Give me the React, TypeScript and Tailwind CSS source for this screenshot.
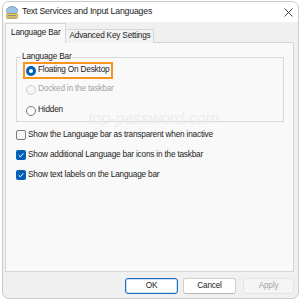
import React from "react";

const FONT = { fontFamily: '"Liberation Sans", Arial, sans-serif' };

const TitleIcon = () => (
    <svg width="12" height="13" viewBox="0 0 12 13" className="shrink-0">
        <ellipse cx="6" cy="4.5" rx="5.5" ry="4" fill="#9cc3e6" stroke="#6b8fb3" strokeWidth="0.8" />
        <rect x="0.5" y="7.5" width="11" height="5" rx="0.8" fill="#e9c95a" stroke="#a88a2c" strokeWidth="0.6" />
        <rect x="1.8" y="9" width="8.4" height="1" fill="#8a8a8a" />
        <rect x="1.8" y="10.8" width="8.4" height="0.8" fill="#9a9a9a" />
    </svg>
);

const Radio = ({ checked, disabled }: { checked?: boolean; disabled?: boolean }) => {
    if (checked) {
        return (
            <span className="w-[10px] h-[10px] rounded-full bg-[#005fb8] flex items-center justify-center shrink-0">
                <span className="w-[4px] h-[4px] rounded-full bg-white" />
            </span>
        );
    }
    return (
        <span
            className={
                disabled
                    ? "w-[10px] h-[10px] rounded-full border border-[#cdcdcd] bg-[#f5f5f5] shrink-0"
                    : "w-[10px] h-[10px] rounded-full border border-[#7a7a7a] bg-[#fdfdfd] shrink-0"
            }
        />
    );
};

const Checkbox = ({ checked }: { checked?: boolean }) =>
    checked ? (
        <span className="w-[10px] h-[10px] rounded-[2px] bg-[#005fb8] flex items-center justify-center shrink-0">
            <svg width="8" height="8" viewBox="0 0 8 8">
                <path d="M1.6 4.2 L3.3 5.8 L6.4 2.4" fill="none" stroke="white" strokeWidth="1" />
            </svg>
        </span>
    ) : (
        <span className="w-[10px] h-[10px] rounded-[2px] border border-[#7a7a7a] bg-[#f6f6f6] shrink-0" />
    );

const OPTIONS = [
    { label: "Show the Language bar as transparent when inactive", checked: false },
    { label: "Show additional Language bar icons in the taskbar", checked: true },
    { label: "Show text labels on the Language bar", checked: true },
];

export default function App() {
    return (
        <div className="w-[300px] h-[300px] bg-white pl-[2px] pt-[1px] text-[8.25px] tracking-[-0.2px] text-[#1b1b1b]" style={FONT}>
            <div className="w-[297px] h-[298px] border border-[#c9c9c9] rounded-[7px] bg-[#f0f0f0] flex flex-col overflow-hidden">
                {/* Title bar */}
                <div className="h-[20px] bg-white flex items-center pl-[3px] pr-[5px] shrink-0">
                    <TitleIcon />
                    <span className="ml-[4px] text-[8.75px] text-[#1a1a1a]">Text Services and Input Languages</span>
                    <svg width="9" height="9" viewBox="0 0 9 9" className="ml-auto">
                        <path d="M0.5 0.5 L8.5 8.5 M8.5 0.5 L0.5 8.5" stroke="#2b2b2b" strokeWidth="0.9" />
                    </svg>
                </div>

                <div className="flex-1 flex flex-col pl-[2px] pr-[4px]">
                    {/* Tabs */}
                    <div className="flex items-end mt-[1px] -mb-px relative z-10">
                        <div className="h-[20px] border border-b-0 border-[#d6d6d6] bg-[#f9f9f9] pl-[5px] pr-[5px] flex items-center">
                            Language Bar
                        </div>
                        <div className="h-[14px] border-t border-r border-[#d6d6d6] bg-[#f3f3f3] pl-[3px] pr-[2px] flex items-center">
                            Advanced Key Settings
                        </div>
                    </div>

                    {/* Panel */}
                    <div className="h-[230px] border border-[#d6d6d6] bg-[#f9f9f9] relative">
                        <div className="relative ml-[10px] mr-[9px] mt-[14px] border border-[#d9d9d9] pt-[4px] pb-[2px] pl-[6px]">
                            <span className="absolute -top-[6px] left-[4px] px-[1px] bg-[#f9f9f9] leading-[10px]">Language Bar</span>
                            <div className="h-[17px] w-fit border-2 border-[#f7941d] pl-[1px] pr-[2px] flex items-center gap-[2px]">
                                <Radio checked />
                                <span>Floating On Desktop</span>
                            </div>
                            <div className="h-[17px] mt-[2px] pl-[3px] flex items-center gap-[2px] text-[#a3a3a3]">
                                <Radio disabled />
                                <span>Docked in the taskbar</span>
                            </div>
                            <div className="h-[17px] mt-[4px] pl-[3px] flex items-center gap-[2px]">
                                <Radio />
                                <span>Hidden</span>
                            </div>
                        </div>

                        <div className="flex flex-col ml-[10px]">
                            {OPTIONS.map((o) => (
                                <div key={o.label} className="h-[14px] mt-[6px] flex items-center gap-[2px]">
                                    <Checkbox checked={o.checked} />
                                    <span>{o.label}</span>
                                </div>
                            ))}
                        </div>

                        {/* watermark */}
                        <span className="absolute left-[82px] top-[68px] text-[16px] leading-none italic tracking-[0px] text-[#ededed] pointer-events-none">
                            top-password.com
                        </span>
                    </div>

                    {/* Buttons */}
                    <div className="flex justify-end mt-[6px]">
                        <button className="w-[53px] h-[16px] rounded-[3px] border border-[#1a6cc0] bg-white text-[#1b1b1b] shadow-[inset_0_0_0_1px_#cfe0f3]">
                            OK
                        </button>
                        <button className="w-[53px] h-[16px] ml-[5px] rounded-[3px] border border-[#d0d0d0] border-b-[#b8b8b8] bg-white text-[#1b1b1b]">
                            Cancel
                        </button>
                        <button className="w-[51px] h-[16px] ml-[7px] rounded-[3px] border border-[#e3e3e3] bg-[#f5f5f5] text-[#a5a5a5]">
                            Apply
                        </button>
                    </div>
                </div>
            </div>
        </div>
    );
}
